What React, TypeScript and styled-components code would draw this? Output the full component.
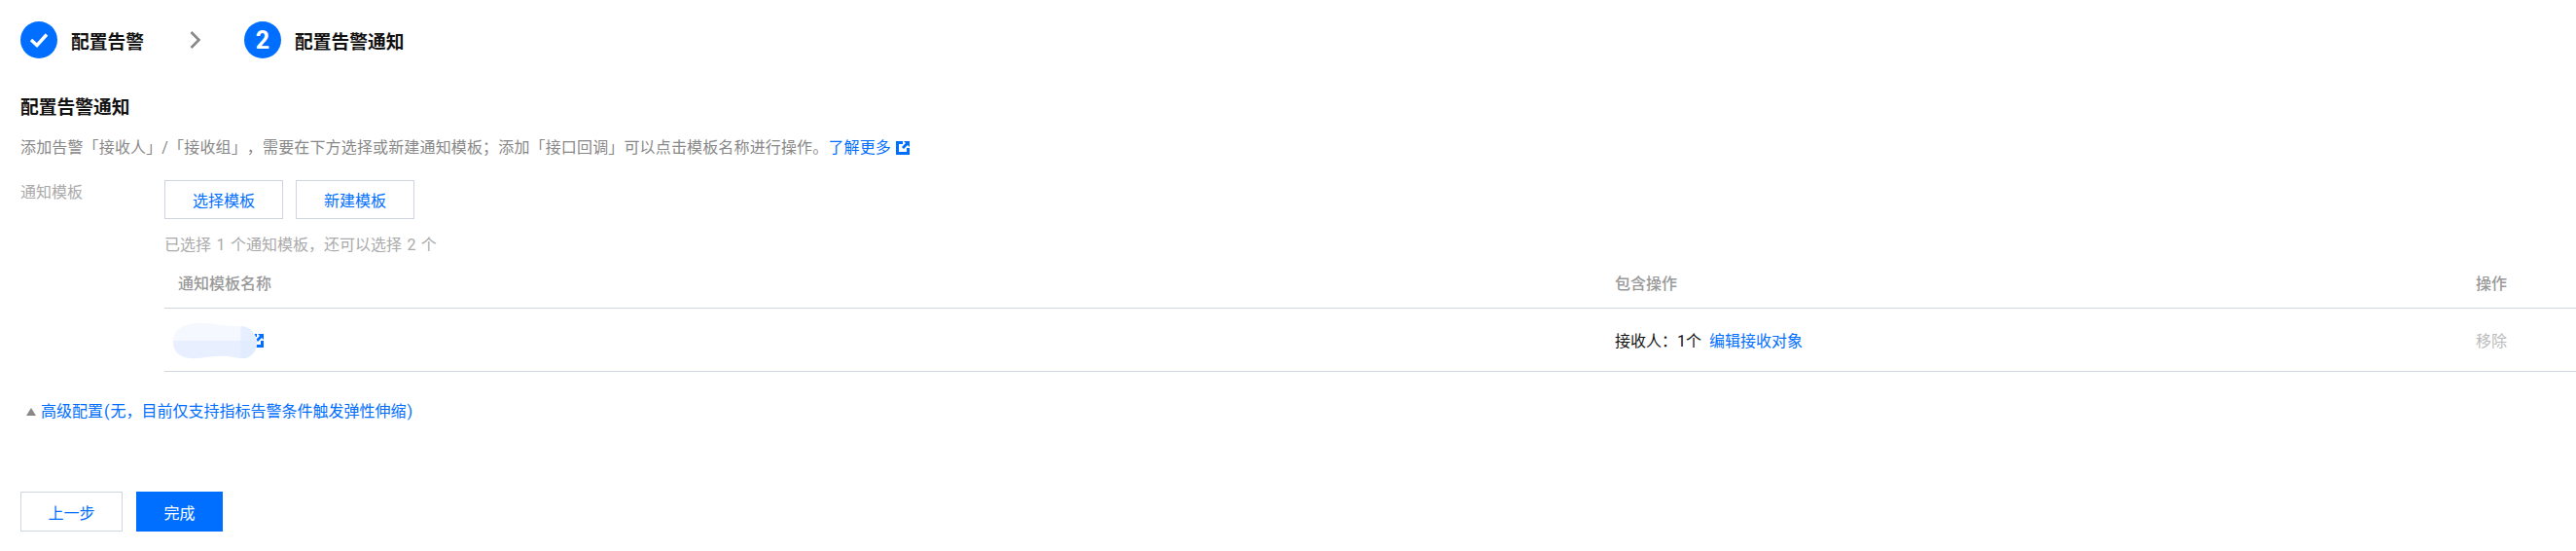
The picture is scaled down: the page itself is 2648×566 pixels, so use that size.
import React from "react";
import styled, { createGlobalStyle } from "styled-components";

const GlobalStyle = createGlobalStyle`
  html, body {
    margin: 0;
    padding: 0;
    background: #fff;
  }
  body {
    font-family: Roboto, "Noto Sans CJK SC", sans-serif;
    font-size: 16px;
    color: #000;
    text-spacing-trim: space-all;
  }
`;

const Page = styled.div`
  width: 2648px;
  height: 566px;
  box-sizing: border-box;
  padding: 22px 0 0 21px;
  overflow: hidden;
`;

const Steps = styled.div`
  display: flex;
  align-items: center;
  height: 38px;
`;

const StepCircle = styled.div`
  width: 38px;
  height: 38px;
  border-radius: 50%;
  background: #006eff;
  color: #fff;
  display: flex;
  align-items: center;
  justify-content: center;
  font-size: 25px;
  font-weight: 700;
`;

const StepLabel = styled.div`
  margin-left: 14px;
  font-size: 18.75px;
  font-weight: 700;
  color: #111;
`;

const StepArrow = styled.svg`
  width: 12px;
  height: 20px;
  margin: 0 44px 0 47px;
`;

const Title = styled.h2`
  margin: 38px 0 0;
  font-size: 18.75px;
  line-height: 26px;
  font-weight: 700;
  color: #111;
`;

const Description = styled.p`
  margin: 16px 0 0;
  font-size: 16px;
  line-height: 24px;
  letter-spacing: 0.15px;
  color: #888;
  display: flex;
  align-items: center;
`;

const Link = styled.a`
  color: #006eff;
`;

const ExternalIcon = styled.svg`
  width: 14px;
  height: 14px;
  margin-left: 5px;
`;

const FormRow = styled.div`
  display: grid;
  grid-template-columns: 148px 1fr;
  margin-top: 21px;
`;

const FormLabel = styled.div`
  font-size: 16px;
  line-height: 26px;
  color: #aaa;
`;

const ButtonRow = styled.div`
  display: flex;
  gap: 13px;
`;

const Button = styled.button<{ $primary?: boolean; $width: number; $height: number }>`
  width: ${(p) => p.$width}px;
  height: ${(p) => p.$height}px;
  box-sizing: border-box;
  border: 1px solid ${(p) => (p.$primary ? "#006eff" : "#cfd5de")};
  background: ${(p) => (p.$primary ? "#006eff" : "#fff")};
  color: ${(p) => (p.$primary ? "#fff" : "#006eff")};
  font-family: inherit;
  font-size: 16px;
  padding: 0;
`;

const Helper = styled.div`
  margin-top: 15px;
  font-size: 16px;
  line-height: 24px;
  word-spacing: 1.5px;
  color: #aaa;
`;

const TableRow = styled.div<{ $height: number }>`
  display: grid;
  grid-template-columns: 1477px 885px 1fr;
  align-items: center;
  height: ${(p) => p.$height}px;
  box-sizing: border-box;
  border-bottom: 1px solid #cfd5de;
  padding-left: 14px;
`;

const HeaderCell = styled.div`
  font-size: 16px;
  font-weight: 500;
  color: #999;
`;

const Cell = styled.div`
  font-size: 16px;
  color: #111;
  display: flex;
  align-items: center;
`;

const MutedCell = styled(Cell)`
  color: #bbb;
`;

const NameCell = styled(Cell)`
  position: relative;
  height: 36px;
`;

const Smear = styled.svg`
  position: absolute;
  left: -6px;
  top: 0;
  width: 88px;
  height: 38px;
`;

const SmallIcon = styled.svg`
  position: absolute;
  left: 74px;
  top: 12px;
  width: 14px;
  height: 14px;
`;

const EditLink = styled(Link)`
  margin-left: 8px;
`;

const Advanced = styled.div`
  display: flex;
  align-items: center;
  margin: 29px 0 0 6px;
  font-size: 16px;
  line-height: 24px;
  color: #006eff;
`;

const Paren = styled.span`
  padding: 0 1px;
`;

const Triangle = styled.span`
  width: 0;
  height: 0;
  border-left: 5.5px solid transparent;
  border-right: 5.5px solid transparent;
  border-bottom: 8px solid #888;
  margin-right: 5px;
`;

const Footer = styled.div`
  display: flex;
  gap: 14px;
  margin-top: 70px;
`;

function External() {
  return (
    <path
      fillRule="evenodd"
      d="M0 0h7v3H3v8h8V7h3v7H0zM8 0h6v6l-2-2-4 4-2-2 4-4z"
      fill="#006eff"
    />
  );
}

export default function App() {
  return (
    <Page>
      <GlobalStyle />
      <Steps>
        <StepCircle>
          <svg width="20" height="16" viewBox="0 0 20 16">
            <path d="M2 8l6 5.5L18 2.5" fill="none" stroke="#fff" strokeWidth="3.4" />
          </svg>
        </StepCircle>
        <StepLabel>配置告警</StepLabel>
        <StepArrow viewBox="0 0 12 20">
          <path d="M1.5 2l8 8-8 8" fill="none" stroke="#888" strokeWidth="2.6" />
        </StepArrow>
        <StepCircle>2</StepCircle>
        <StepLabel>配置告警通知</StepLabel>
      </Steps>
      <Title>配置告警通知</Title>
      <Description>
        添加告警「接收人」/「接收组」，需要在下方选择或新建通知模板；添加「接口回调」可以点击模板名称进行操作。
        <Link>了解更多</Link>
        <ExternalIcon viewBox="0 0 14 14">
          <External />
        </ExternalIcon>
      </Description>
      <FormRow>
        <FormLabel>通知模板</FormLabel>
        <div>
          <ButtonRow>
            <Button $width={122} $height={40}>选择模板</Button>
            <Button $width={122} $height={40}>新建模板</Button>
          </ButtonRow>
          <Helper>已选择 1 个通知模板，还可以选择 2 个</Helper>
          <div>
            <TableRow $height={53}>
              <HeaderCell>通知模板名称</HeaderCell>
              <HeaderCell>包含操作</HeaderCell>
              <HeaderCell>操作</HeaderCell>
            </TableRow>
            <TableRow $height={65}>
              <NameCell>
                <SmallIcon viewBox="0 0 14 14">
                  <External />
                </SmallIcon>
                <Smear viewBox="0 0 90 38" preserveAspectRatio="none">
                  <path
                    d="M6 8C12 2 24 0 36 1c12 1 24 4 36 3 8 0 14 5 17 14 1 8-3 16-12 19-8 1-16-3-28-2-12 0-20 3-30 2C6 36 1 30 1 22 1 16 2 12 6 8z"
                    fill="#f5f8ff"
                  />
                  <path d="M72 4c8 0 14 5 17 14 1 8-3 16-12 19h-5z" fill="#e6efff" />
                  <path d="M1 19h88c1 8-3 15-12 18-8 1-16-3-28-2-12 0-20 3-30 2C6 36 1 28 1 19z" fill="#dfeaff" opacity="0.6" />
                </Smear>
              </NameCell>
              <Cell>
                接收人：1个<EditLink>编辑接收对象</EditLink>
              </Cell>
              <MutedCell>移除</MutedCell>
            </TableRow>
          </div>
        </div>
      </FormRow>
      <Advanced>
        <Triangle />
        <span>
          高级配置<Paren>(</Paren>无，目前仅支持指标告警条件触发弹性伸缩<Paren>)</Paren>
        </span>
      </Advanced>
      <Footer>
        <Button $width={105} $height={41}>上一步</Button>
        <Button $primary $width={89} $height={41}>完成</Button>
      </Footer>
    </Page>
  );
}
